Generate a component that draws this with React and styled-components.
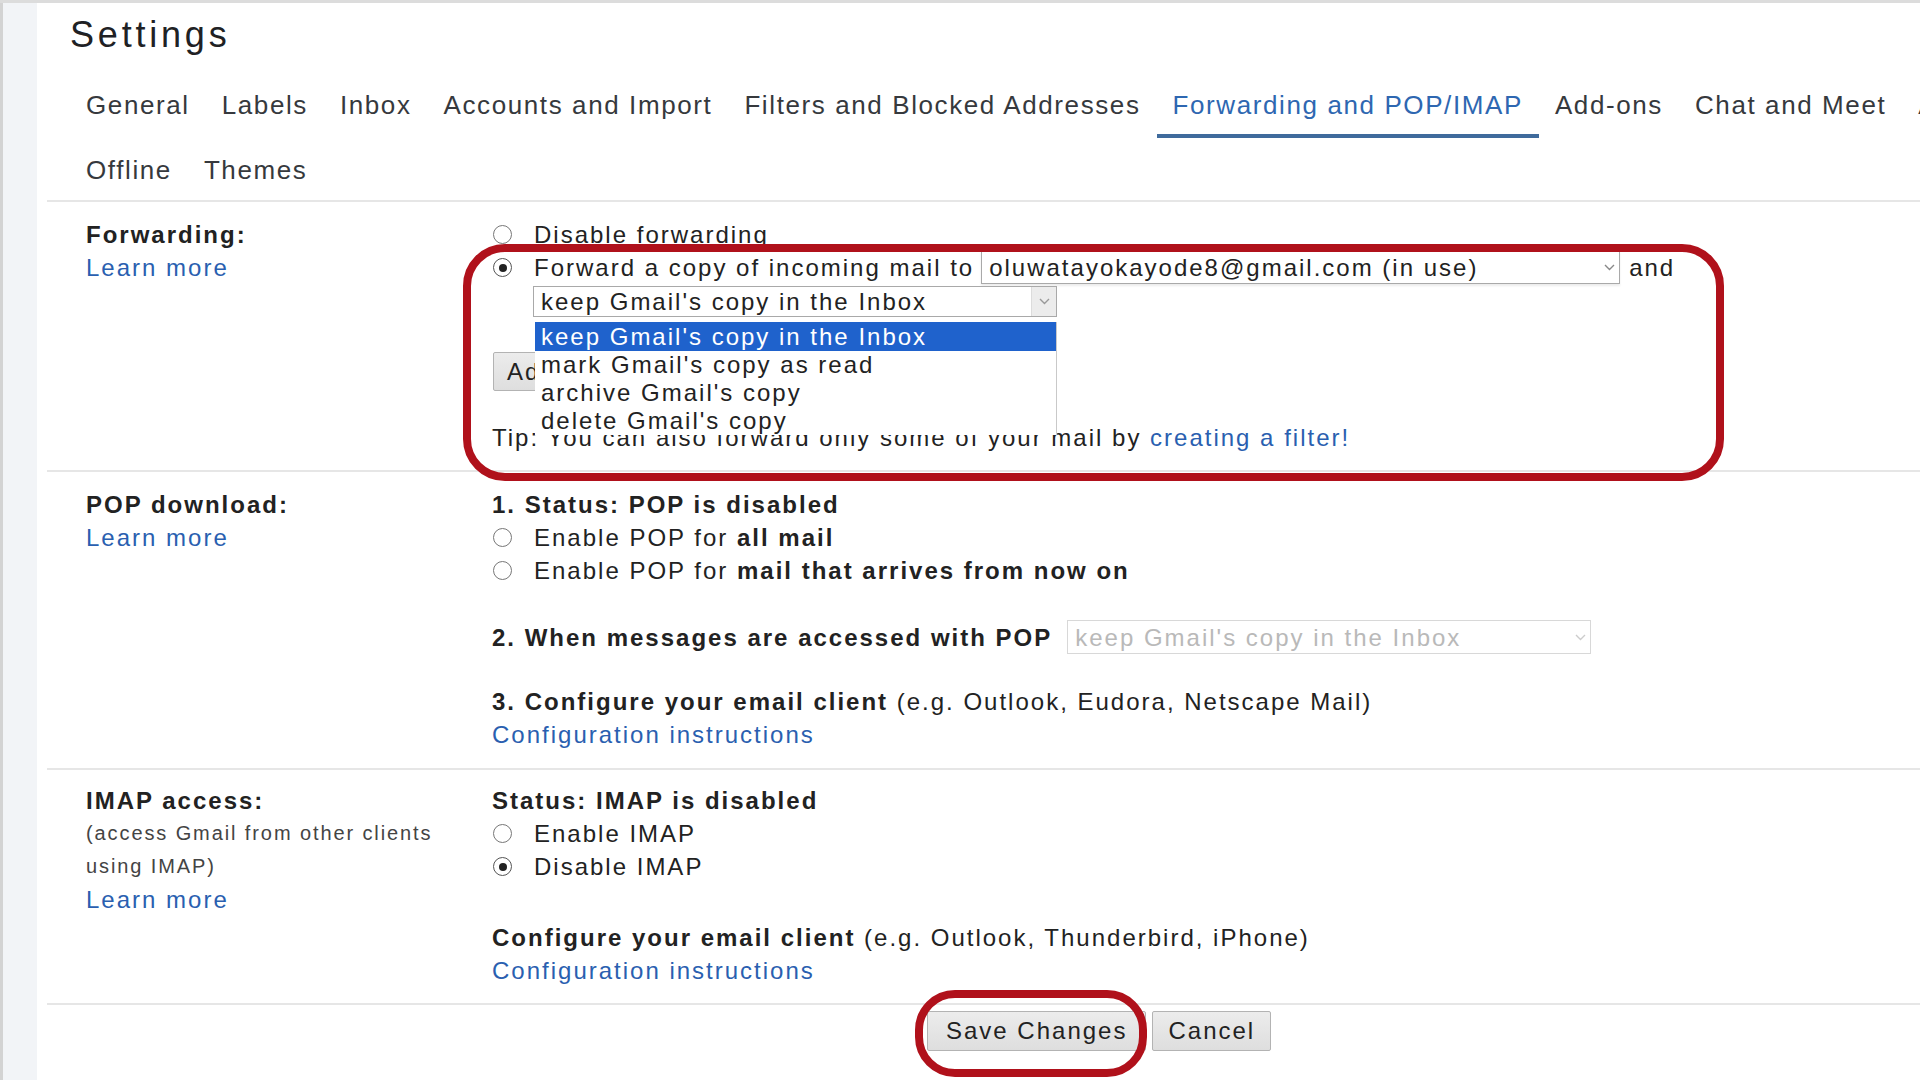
import React from 'react';
import styled, { createGlobalStyle } from 'styled-components';

const GlobalStyle = createGlobalStyle`
  html, body { margin: 0; padding: 0; background: #fff; overflow: hidden; }
  body { font-family: "Liberation Sans", Arial, sans-serif; color: #222; }
  * { box-sizing: border-box; }
`;

const Page = styled.div`
  position: relative;
  display: flex;
  width: 1920px;
  height: 1080px;
  border-top: 3px solid #dcdcdc;
  overflow: hidden;
  background: #fff;
`;

const Rail = styled.div`
  flex: 0 0 37px;
  background: #f2f4f7;
  border-left: 3px solid #d3d3d3;
`;

const Main = styled.main`
  flex: 1;
  min-width: 0;
  padding-left: 10px;
`;

const Header = styled.header`
  padding: 12px 0 0 23px;
`;

const Title = styled.h1`
  margin: 0;
  font-size: 36px;
  line-height: 40px;
  font-weight: 400;
  letter-spacing: 3.8px;
  color: #202124;
`;

const TabRow = styled.nav`
  display: flex;
  white-space: nowrap;
  margin-top: ${p => (p.$second ? 14 : 32)}px;
`;

const Tab = styled.a`
  display: block;
  padding: 0 16px ${p => (p.$short ? 8 : 11)}px;
  font-size: 26px;
  line-height: 36px;
  letter-spacing: 1.6px;
  color: ${p => (p.$active ? '#2e67b1' : '#36393d')};
  border-bottom: 4px solid ${p => (p.$active ? '#3f6b9c' : 'transparent')};
  text-decoration: none;
`;

const Section = styled.section`
  display: grid;
  grid-template-columns: 406px 1fr;
  border-top: 2px solid #e6e6e6;
  padding: ${p => p.$pt}px 0 ${p => p.$pb}px 39px;
`;

const Column = styled.div`
  display: flex;
  flex-direction: column;
  align-items: flex-start;
`;

const Line = styled.div`
  display: flex;
  align-items: center;
  min-height: 33px;
  font-size: 24px;
  line-height: 33px;
  letter-spacing: 2px;
  white-space: nowrap;
  color: #222;
  margin-top: ${p => p.$mt || 0}px;
`;

const Label = styled.span`
  font-weight: 700;
  color: #222;
`;

const Small = styled.div`
  font-size: 20px;
  line-height: 33px;
  letter-spacing: 1.9px;
  color: #444;
  white-space: nowrap;
`;

const Link = styled.a`
  color: #2a5fb0;
  text-decoration: none;
  font-size: 24px;
  line-height: 33px;
  letter-spacing: 2px;
  white-space: nowrap;
`;

const Radio = styled.span`
  flex: 0 0 19px;
  width: 19px;
  height: 19px;
  margin: 0 22px 0 1px;
  border-radius: 50%;
  border: 1.5px solid ${p => (p.$checked ? '#555' : '#777')};
  display: flex;
  align-items: center;
  justify-content: center;
  background: #fff;
  &::after {
    content: '';
    width: 8px;
    height: 8px;
    border-radius: 50%;
    background: ${p => (p.$checked ? '#222' : 'transparent')};
  }
`;

const SelectWrap = styled.div`
  position: relative;
  margin-left: ${p => p.$ml || 0}px;
  margin-top: ${p => p.$mt || 0}px;
`;

const SelectBox = styled.div`
  display: flex;
  align-items: center;
  width: ${p => p.$w}px;
  height: ${p => p.$h}px;
  padding-left: 7px;
  border: 1px solid ${p => (p.$disabled ? '#d8d8d8' : '#a9a9a9')};
  background: #fff;
  font-size: 24px;
  letter-spacing: 2px;
  color: ${p => (p.$disabled ? '#b9b9b9' : '#222')};
  white-space: nowrap;
  overflow: hidden;
  box-shadow: ${p => (p.$shadow ? '0 2px 2px rgba(0,0,0,0.08)' : 'none')};
`;

const SelectText = styled.span`
  flex: 1;
  min-width: 0;
`;

const ArrowBox = styled.span`
  flex: 0 0 ${p => (p.$boxed ? 25 : 20)}px;
  align-self: stretch;
  display: flex;
  align-items: center;
  justify-content: center;
  background: ${p => (p.$boxed ? '#ececec' : 'transparent')};
  border-left: ${p => (p.$boxed ? '1px solid #dcdcdc' : 'none')};
`;

const Chevron = ({ color = '#777' }) => (
  <svg width="11" height="7" viewBox="0 0 11 7">
    <path d="M1 1l4.5 4.5L10 1" fill="none" stroke={color} strokeWidth="1.4" />
  </svg>
);

const Gap = styled.span`
  display: inline-block;
  width: ${p => p.$w}px;
`;

const DropList = styled.ul`
  position: absolute;
  z-index: 2;
  top: calc(100% + 5px);
  left: 2px;
  width: 522px;
  margin: 0;
  padding: 0;
  list-style: none;
  background: #fff;
  border-right: 1px solid #c9c9c9;
`;

const DropItem = styled.li`
  height: ${p => (p.$active ? 29 : 28)}px;
  line-height: ${p => (p.$active ? 29 : 28)}px;
  padding-left: 6px;
  font-size: 24px;
  letter-spacing: 2px;
  white-space: nowrap;
  color: ${p => (p.$active ? '#fff' : '#222')};
  background: ${p => (p.$active ? '#1f62cc' : 'transparent')};
`;

const GrayButton = styled.button`
  height: ${p => p.$h || 40}px;
  padding: 0 ${p => p.$px || 18}px;
  margin: ${p => p.$mt || 0}px 0 0 ${p => p.$ml || 0}px;
  font-family: inherit;
  font-size: 24px;
  letter-spacing: 2px;
  color: #222;
  background: linear-gradient(#ececec, #dedede);
  border: 1px solid #b3b3b3;
  border-radius: 2px;
  white-space: nowrap;
`;

const Footer = styled.footer`
  display: flex;
  gap: 6px;
  border-top: 2px solid #e6e6e6;
  padding: 6px 0 0 880px;
`;

const ForwardHighlight = styled.div`
  position: absolute;
  z-index: 3;
  left: 463px;
  top: 241px;
  width: 1261px;
  height: 237px;
  border: 8px solid #b0111b;
  border-radius: 42px;
  pointer-events: none;
`;

const SaveHighlight = styled.div`
  position: absolute;
  z-index: 3;
  left: 915px;
  top: 987px;
  width: 232px;
  height: 87px;
  border: 8px solid #b0111b;
  border-radius: 40px;
  pointer-events: none;
`;

const tabs1 = [
  'General',
  'Labels',
  'Inbox',
  'Accounts and Import',
  'Filters and Blocked Addresses',
  'Forwarding and POP/IMAP',
  'Add-ons',
  'Chat and Meet',
  'Advanced',
];

export default function App() {
  return (
    <>
      <GlobalStyle />
      <Page>
        <Rail />
        <Main>
          <Header>
            <Title>Settings</Title>
            <TabRow>
              {tabs1.map(t => (
                <Tab key={t} $active={t === 'Forwarding and POP/IMAP'}>
                  {t}
                </Tab>
              ))}
            </TabRow>
            <TabRow $second>
              <Tab $short>Offline</Tab>
              <Tab $short>Themes</Tab>
            </TabRow>
          </Header>

          <Section $pt={16} $pb={16}>
            <Column>
              <Line>
                <Label>Forwarding:</Label>
              </Line>
              <Link>Learn more</Link>
            </Column>
            <Column>
              <Line>
                <Radio />
                Disable forwarding
              </Line>
              <Line>
                <Radio $checked />
                Forward a copy of incoming mail to
                <Gap $w={7} />
                <SelectBox $w={639} $h={33} $shadow>
                  <SelectText>oluwatayokayode8@gmail.com (in use)</SelectText>
                  <ArrowBox>
                    <Chevron color="#888" />
                  </ArrowBox>
                </SelectBox>
                <Gap $w={9} />
                and
              </Line>
              <SelectWrap $ml={41} $mt={2}>
                <SelectBox $w={524} $h={31}>
                  <SelectText>keep Gmail's copy in the Inbox</SelectText>
                  <ArrowBox $boxed>
                    <Chevron color="#999" />
                  </ArrowBox>
                </SelectBox>
                <DropList>
                  <DropItem $active>keep Gmail's copy in the Inbox</DropItem>
                  <DropItem>mark Gmail's copy as read</DropItem>
                  <DropItem>archive Gmail's copy</DropItem>
                  <DropItem>delete Gmail's copy</DropItem>
                </DropList>
              </SelectWrap>
              <GrayButton $h={39} $px={13} $mt={35} $ml={1}>
                Add a forwarding address
              </GrayButton>
              <Line $mt={30}>
                Tip: You can also forward only some of your mail by&nbsp;
                <Link>creating a filter!</Link>
              </Line>
            </Column>
          </Section>

          <Section $pt={16} $pb={17}>
            <Column>
              <Line>
                <Label>POP download:</Label>
              </Line>
              <Link>Learn more</Link>
            </Column>
            <Column>
              <Line>
                <Label>1. Status: POP is disabled</Label>
              </Line>
              <Line>
                <Radio />
                Enable POP for&nbsp;<Label>all mail</Label>
              </Line>
              <Line>
                <Radio />
                Enable POP for&nbsp;<Label>mail that arrives from now on</Label>
              </Line>
              <Line $mt={33}>
                <Label>2. When messages are accessed with POP</Label>
                <Gap $w={15} />
                <SelectBox $w={524} $h={34} $disabled>
                  <SelectText>keep Gmail's copy in the Inbox</SelectText>
                  <ArrowBox>
                    <Chevron color="#ccc" />
                  </ArrowBox>
                </SelectBox>
              </Line>
              <Line $mt={31}>
                <Label>3. Configure your email client</Label>
                &nbsp;(e.g. Outlook, Eudora, Netscape Mail)
              </Line>
              <Link>Configuration instructions</Link>
            </Column>
          </Section>

          <Section $pt={14} $pb={16}>
            <Column>
              <Line>
                <Label>IMAP access:</Label>
              </Line>
              <Small>(access Gmail from other clients</Small>
              <Small>using IMAP)</Small>
              <Link>Learn more</Link>
            </Column>
            <Column>
              <Line>
                <Label>Status: IMAP is disabled</Label>
              </Line>
              <Line>
                <Radio />
                Enable IMAP
              </Line>
              <Line>
                <Radio $checked />
                Disable IMAP
              </Line>
              <Line $mt={38}>
                <Label>Configure your email client</Label>
                &nbsp;(e.g. Outlook, Thunderbird, iPhone)
              </Line>
              <Link>Configuration instructions</Link>
            </Column>
          </Section>

          <Footer>
            <GrayButton>Save Changes</GrayButton>
            <GrayButton $px={15}>Cancel</GrayButton>
          </Footer>
        </Main>
        <ForwardHighlight />
        <SaveHighlight />
      </Page>
    </>
  );
}
